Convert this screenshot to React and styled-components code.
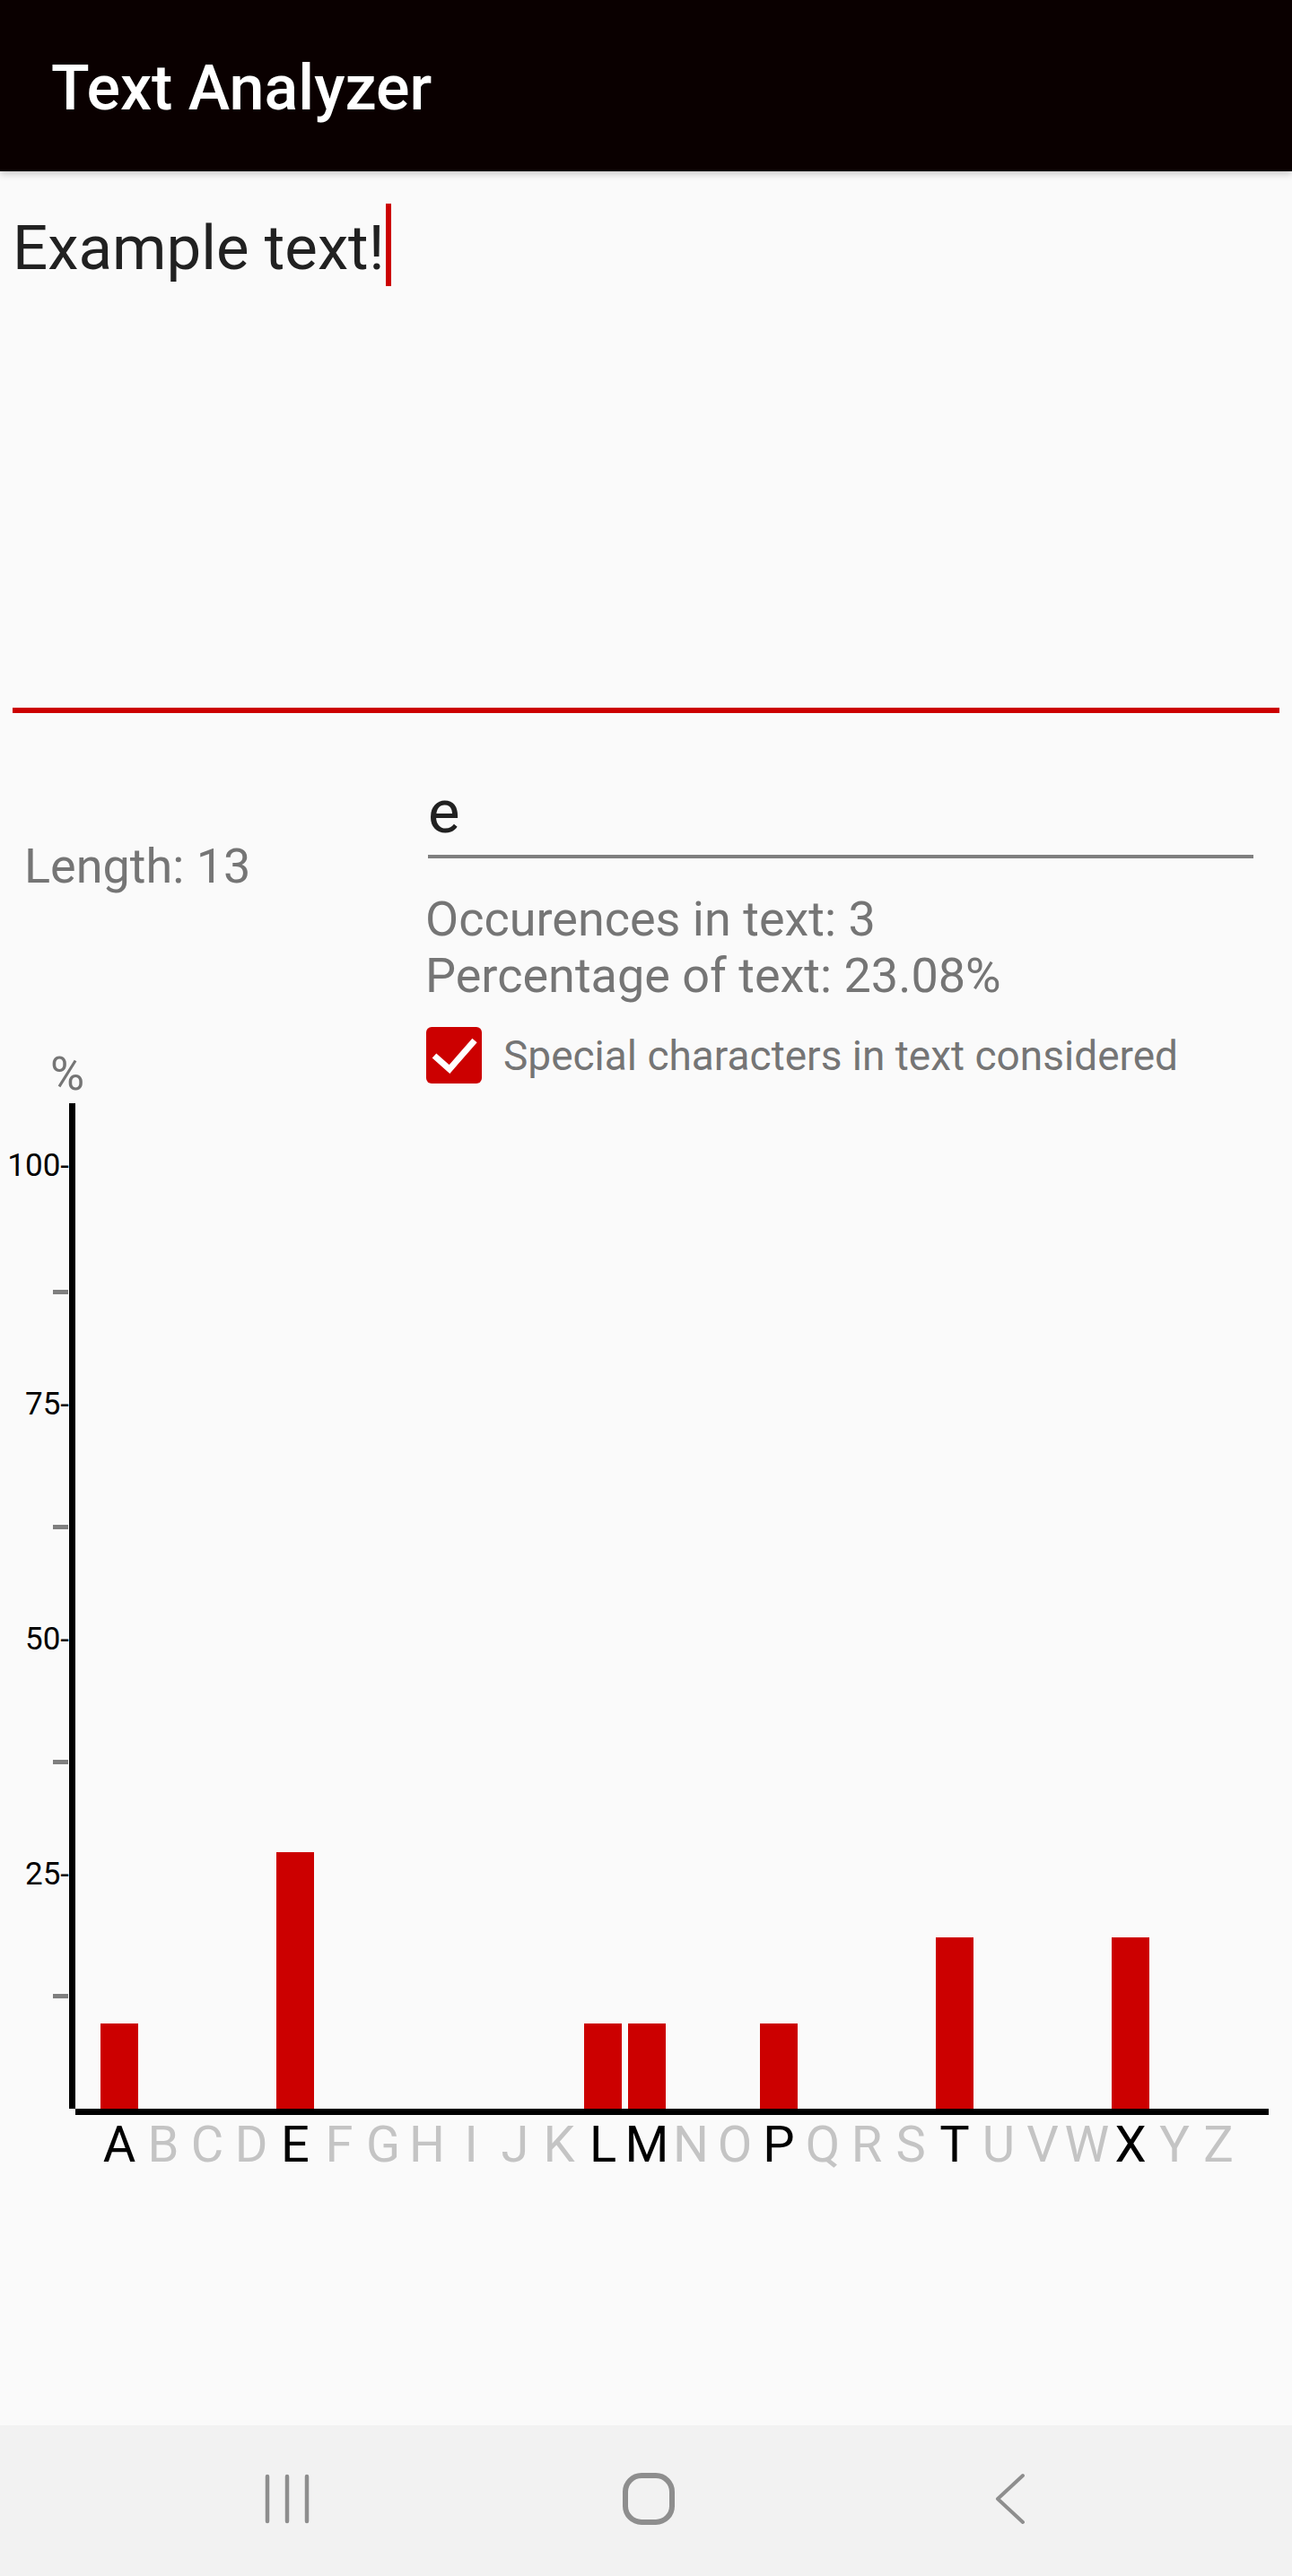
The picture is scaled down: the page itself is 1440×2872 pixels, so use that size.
import React from 'react';
import styled, { createGlobalStyle } from 'styled-components';

const GlobalStyle = createGlobalStyle`
  html, body {
    margin: 0;
    padding: 0;
  }
  body {
    background: #fafafa;
    font-family: Roboto, "Noto Sans", sans-serif;
  }
`;

const Screen = styled.div`
  display: flex;
  flex-direction: column;
  width: 1440px;
  min-height: 2872px;
  background: #fafafa;
`;

const AppBar = styled.header`
  position: relative;
  z-index: 1;
  height: 191px;
  box-sizing: border-box;
  padding: 57px 0 0 57px;
  background: #0a0000;
  box-shadow: 0 3px 8px rgba(0, 0, 0, 0.2);
`;

const Title = styled.h1`
  margin: 0;
  font-size: 70px;
  font-weight: 500;
  line-height: normal;
  color: #ffffff;
`;

const Editor = styled.div`
  height: 604px;
  box-sizing: border-box;
  margin: 0 14px;
  padding-top: 45px;
  border-bottom: 6px solid #cc0000;
  font-size: 69px;
  line-height: normal;
  color: #212121;
`;

const Caret = styled.span`
  display: inline-block;
  width: 6px;
  height: 92px;
  margin: -12px 0 -19px 2px;
  vertical-align: baseline;
  background: #cc0000;
`;

const Info = styled.section`
  display: flex;
`;

const LeftCol = styled.div`
  width: 474px;
  box-sizing: border-box;
  padding: 139px 0 0 27px;
  display: flex;
  flex-direction: column;
  justify-content: space-between;
`;

const Muted = styled.div`
  font-size: ${(p) => p.size || 54}px;
  line-height: ${(p) => p.lh || 'normal'};
  color: #757575;
  margin-left: ${(p) => p.indent || 0}px;
`;

const RightCol = styled.div`
  flex: 1;
  padding: 71px 43px 20px 0;
`;

const CharInput = styled.div`
  margin-left: 3px;
  padding-bottom: 9px;
  border-bottom: 4px solid #7f7f7f;
  font-size: 67px;
  line-height: normal;
  color: #212121;
`;

const Stats = styled.div`
  margin-top: 36px;
`;

const CheckRow = styled.label`
  display: flex;
  align-items: center;
  gap: 24px;
  margin-top: 26px;
  height: 63px;
`;

const Box = styled.span`
  display: flex;
  width: 62px;
  height: 63px;
  margin-left: 1px;
  border-radius: 6px;
  background: #cc0000;
`;

const Chart = styled.section`
  padding-top: 2px;
`;

const Plot = styled.div`
  position: relative;
  height: 1121px;
  margin-left: 77px;
  padding-left: 24.5px;
  border-left: 7px solid #000000;
  display: flex;
  align-items: flex-end;
`;

const Column = styled.div`
  width: 49px;
  display: flex;
  justify-content: center;
`;

const Bar = styled.div`
  width: 42px;
  background: #cc0000;
`;

const TickLabel = styled.span`
  position: absolute;
  right: calc(100% + 7px);
  font-size: 35px;
  line-height: 35px;
  color: #000000;
  transform: translateY(50%);
  white-space: nowrap;
`;

const MinorTick = styled.span`
  position: absolute;
  right: calc(100% + 8px);
  width: 17px;
  height: 5px;
  background: #7f7f7f;
`;

const XAxis = styled.div`
  width: 1330px;
  height: 7px;
  margin-left: 84px;
  background: #000000;
`;

const Letters = styled.div`
  display: flex;
  margin-left: 84px;
  padding-left: 24.5px;
`;

const Letter = styled.span`
  width: 49px;
  text-align: center;
  font-size: 56px;
  line-height: normal;
  color: ${(p) => (p.on ? '#000000' : '#c4c4c4')};
`;

const NavBar = styled.nav`
  margin-top: auto;
  height: 168px;
  padding: 0 0 4px 6px;
  box-sizing: border-box;
  background: #f2f2f2;
  display: flex;
  justify-content: center;
  align-items: center;
`;

const NavSlot = styled.div`
  width: 403px;
  display: flex;
  justify-content: center;
  align-items: center;
`;

const TEXT = 'Example text!';
const SEARCH = 'e';
const SCALE = 10.48; // px per percent
const ALPHABET = 'ABCDEFGHIJKLMNOPQRSTUVWXYZ'.split('');

function letterStats(text) {
  const letters = text.toUpperCase().replace(/[^A-Z]/g, '');
  const counts = {};
  for (const ch of letters) counts[ch] = (counts[ch] || 0) + 1;
  return ALPHABET.map((ch) => ({
    ch,
    pct: counts[ch] ? (counts[ch] / letters.length) * 100 : 0,
  }));
}

const labels = [
  { text: '100-', at: 1052 },
  { text: '75-', at: 786 },
  { text: '50-', at: 524 },
  { text: '25-', at: 262 },
];
const minors = [910, 648, 386, 125];

export default function App() {
  const stats = letterStats(TEXT);
  const occ = TEXT.toLowerCase().split(SEARCH).length - 1;
  const share = ((occ / TEXT.length) * 100).toFixed(2);

  return (
    <Screen>
      <GlobalStyle />
      <AppBar>
        <Title>Text Analyzer</Title>
      </AppBar>

      <Editor>
        {TEXT}
        <Caret />
      </Editor>

      <Info>
        <LeftCol>
          <Muted>Length: {TEXT.length}</Muted>
          <Muted size={52} lh="61px" indent={29}>%</Muted>
        </LeftCol>
        <RightCol>
          <CharInput>{SEARCH}</CharInput>
          <Stats>
            <Muted lh="63px">Occurences in text: {occ}</Muted>
            <Muted lh="63px">Percentage of text: {share}%</Muted>
          </Stats>
          <CheckRow>
            <Box>
              <svg width="62" height="63" viewBox="0 0 62 63">
                <path d="M9 32 L26 47 L54 15" fill="none" stroke="#fff" strokeWidth="7" />
              </svg>
            </Box>
            <Muted size={46}>Special characters in text considered</Muted>
          </CheckRow>
        </RightCol>
      </Info>

      <Chart>
        <Plot>
          {labels.map((l) => (
            <TickLabel key={l.text} style={{ bottom: l.at }}>{l.text}</TickLabel>
          ))}
          {minors.map((m) => (
            <MinorTick key={m} style={{ bottom: m - 2 }} />
          ))}
          {stats.map((s) => (
            <Column key={s.ch}>
              <Bar style={{ height: Math.round(s.pct * SCALE) }} />
            </Column>
          ))}
        </Plot>
        <XAxis />
        <Letters>
          {stats.map((s) => (
            <Letter key={s.ch} on={s.pct > 0 ? 1 : 0}>{s.ch}</Letter>
          ))}
        </Letters>
      </Chart>

      <NavBar>
        <NavSlot>
          <svg width="52" height="56" viewBox="0 0 52 56">
            <g stroke="#8e8e8e" strokeWidth="4.5" strokeLinecap="round">
              <line x1="4" y1="3" x2="4" y2="53" />
              <line x1="26" y1="3" x2="26" y2="53" />
              <line x1="48" y1="3" x2="48" y2="53" />
            </g>
          </svg>
        </NavSlot>
        <NavSlot>
          <svg width="60" height="60" viewBox="0 0 60 60">
            <rect x="4" y="4" width="52" height="52" rx="18" fill="none" stroke="#8e8e8e" strokeWidth="6" />
          </svg>
        </NavSlot>
        <NavSlot>
          <svg width="34" height="58" viewBox="0 0 34 58">
            <path d="M31 3 L3 29 L31 55" fill="none" stroke="#8e8e8e" strokeWidth="4" strokeLinecap="round" strokeLinejoin="round" />
          </svg>
        </NavSlot>
      </NavBar>
    </Screen>
  );
}
